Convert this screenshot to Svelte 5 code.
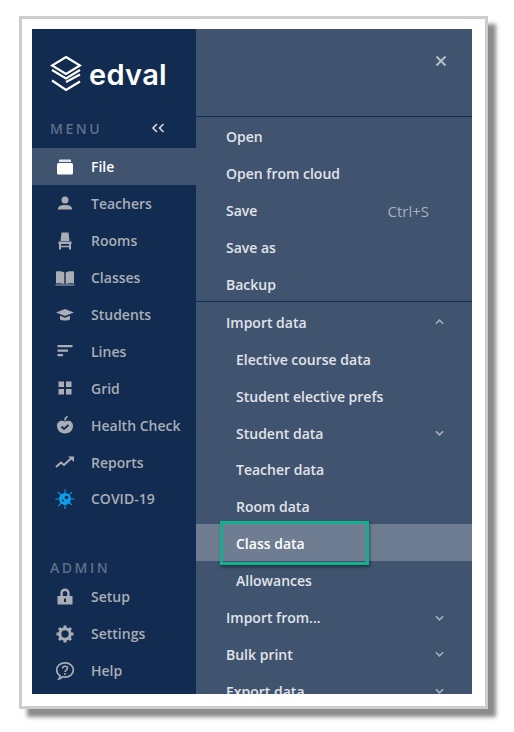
<script>
  const mainMenu = [
    { label: "File", icon: "file", active: true },
    { label: "Teachers", icon: "user" },
    { label: "Rooms", icon: "chair" },
    { label: "Classes", icon: "book" },
    { label: "Students", icon: "cap" },
    { label: "Lines", icon: "lines" },
    { label: "Grid", icon: "grid" },
    { label: "Health Check", icon: "apple" },
    { label: "Reports", icon: "trend" },
    { label: "COVID-19", icon: "virus" },
  ];
  const adminMenu = [
    { label: "Setup", icon: "lock" },
    { label: "Settings", icon: "gear" },
    { label: "Help", icon: "help" },
  ];
  const topItems = [
    { label: "Open" },
    { label: "Open from cloud" },
    { label: "Save", shortcut: "Ctrl+S" },
    { label: "Save as" },
    { label: "Backup" },
  ];
  const subItems = [
    { label: "Elective course data" },
    { label: "Student elective prefs" },
    { label: "Student data", chevron: "down" },
    { label: "Teacher data" },
    { label: "Room data" },
    { label: "Class data", selected: true },
    { label: "Allowances" },
  ];
  const bottomItems = ["Import from...", "Bulk print", "Export data"];
</script>

{#snippet icon(name)}
  <svg class="icon" viewBox="0 0 20 20" width="20" height="20" aria-hidden="true">
    {#if name === "file"}
      <path d="M4 3.500c0-.6.400-1 1-1h10c.6 0 1 .4 1 1V5H4z" fill="currentColor" opacity="0.85" />
      <rect x="2" y="6" width="16" height="11.500" rx="1.500" fill="currentColor" />
    {:else if name === "user"}
      <circle cx="10" cy="6" r="3.500" fill="currentColor" />
      <path d="M2.800 15.500c0-3.200 2.800-4.500 7.200-4.500s7.200 1.300 7.200 4.500z" fill="currentColor" />
    {:else if name === "chair"}
      <path d="M6.500 1.500h7l1 8.500h-9zM3.500 10.500h13v2.500h-13zM4 13h2v5.500H4zM14 13h2v5.500h-2zM6 14.800h8v1.500H6z" fill="currentColor" />
    {:else if name === "book"}
      <path d="M1 3.500c3-.4 6-.4 8.300 1V16c-2.300-1-5.300-1-8.300-.6zM19 3.500c-3-.4-6-.4-8.300 1V16c2.300-1 5.300-1 8.300-.6z" fill="currentColor" />
      <path d="M0.500 17h19" stroke="currentColor" stroke-width="1" />
    {:else if name === "cap"}
      <path d="M1 7.500 10 4l9 3.500-9 3.500z" fill="currentColor" />
      <path d="M5 10.800 10 12.700l5-1.900v3.400c-1.300 1-3 1.300-5 1.300s-3.700-.3-5-1.300z" fill="currentColor" />
    {:else if name === "lines"}
      <path d="M2.500 4h15v2.300h-15zM2.500 8.500h10.500v2.300H2.500zM2.500 13h5.500v2.300H2.500z" fill="currentColor" />
    {:else if name === "grid"}
      <path d="M3.500 3.500h5.500v5.500H3.500zM11 3.500h5.500v5.500H11zM3.500 11h5.500v5.500H3.500zM11 11h5.500v5.500H11z" fill="currentColor" />
    {:else if name === "apple"}
      <path d="M10 6.500c4-2 8 0 8 4.500 0 4.500-3.500 7.500-8 7.500s-8-3-8-7.500c0-4.500 4-6.500 8-4.500z" fill="currentColor" />
      <path d="M10 5.500c0-2 1-3.300 2.500-4.200" fill="none" stroke="currentColor" stroke-width="1.600" />
      <path d="M6.500 11.500l2.500 2.500 4.500-4" fill="none" stroke="#122b50" stroke-width="1.800" />
    {:else if name === "trend"}
      <path d="M1 15l5-4.500 3 2.500 7-6.500" fill="none" stroke="currentColor" stroke-width="2" />
      <path d="M13 4.500h6v5.500z" fill="currentColor" />
    {:else if name === "virus"}
      <g stroke="#0c9fe8" stroke-width="1.100" stroke-linecap="round">
        <path d="M10 10 10 0.800M10 10 10 19.500M10 10 0.800 10M10 10 19.200 10M10 10 3.200 3.200M10 10 16.800 3.400M10 10 3.500 16.800M10 10 16.500 15.500" />
      </g>
      <circle cx="10" cy="10" r="6" fill="#0c9fe8" />
      <circle cx="11.500" cy="8.500" r="1.800" fill="#122b50" />
      <circle cx="7.800" cy="11.500" r="1" fill="#122b50" />
    {:else if name === "lock"}
      <path fill-rule="evenodd" d="M10 1.500c2.800 0 4.600 1.900 4.600 4.600V9H17.500v8.500h-15V9h2.900V6.100c0-2.700 1.800-4.600 4.600-4.600zM7.800 9h4.400V6.100c0-1.300-.9-2.200-2.200-2.200s-2.200.9-2.200 2.200z" fill="currentColor" />
      <rect x="9" y="11.500" width="2" height="3.500" fill="#122b50" />
    {:else if name === "gear"}
      <circle cx="10" cy="10" r="5.200" fill="none" stroke="currentColor" stroke-width="3" />
      <path d="M10 1.500v3M10 15.500v3M1.500 10h3M15.500 10h3M4 4l2.200 2.200M13.800 13.800 16 16M4 16l2.200-2.200M13.800 6.200 16 4" stroke="currentColor" stroke-width="3" />
    {:else if name === "help"}
      <path d="M10 1.800c4.700 0 8.300 3 8.300 7.200s-3.600 7.200-8.300 7.200c-.9 0-1.800-.1-2.600-.4-1 1.200-2 1.900-3.400 2.200.7-1 1-2 1-3.300-2-1.300-3.300-3.400-3.300-5.700 0-4.200 3.600-7.200 8.300-7.200z" fill="none" stroke="currentColor" stroke-width="1.700" />
      <path d="M7.500 7.300c.2-1.400 1.200-2.100 2.500-2.100 1.500 0 2.500.9 2.500 2.100 0 1.800-2.500 1.800-2.500 3.700" fill="none" stroke="currentColor" stroke-width="1.600" />
      <circle cx="10" cy="13" r="1" fill="currentColor" />
    {/if}
  </svg>
{/snippet}

{#snippet chevron(dir)}
  <svg class="chevron" class:up={dir === "up"} viewBox="0 0 10 6" width="9" height="6" aria-hidden="true">
    <path d="M1 1l4 4 4-4" fill="none" stroke="currentColor" stroke-width="1.800" />
  </svg>
{/snippet}

<div class="page">
  <div class="frame">
    <div class="app">
      <aside class="sidebar">
        <div class="logo">
          <svg viewBox="0 0 32 38" width="32" height="38" aria-hidden="true">
            <g fill="none" stroke="#fff" stroke-width="2.200">
              <path d="M16 2 30 10.500 16 19 2 10.500z" />
              <path d="M2 15 16 23.500 30 15" />
              <path d="M2 25.500 16 35 30 26.500M16 27 30 19.500" />
            </g>
          </svg>
          <span class="wordmark">edval</span>
        </div>
        <div class="section-head">
          <span class="section-label">MENU</span>
          <svg class="collapse" viewBox="0 0 14 10" width="14" height="10" aria-hidden="true">
            <path d="M6 1 2 5l4 4M12.500 1l-4 4 4 4" fill="none" stroke="currentColor" stroke-width="1.600" />
          </svg>
        </div>
        <nav>
          {#each mainMenu as item}
            <div class="nav-item" class:active={item.active}>
              {@render icon(item.icon)}
              <span>{item.label}</span>
            </div>
          {/each}
        </nav>
        <div class="admin-label section-label">ADMIN</div>
        <nav>
          {#each adminMenu as item}
            <div class="nav-item">
              {@render icon(item.icon)}
              <span>{item.label}</span>
            </div>
          {/each}
        </nav>
      </aside>

      <section class="panel">
        <div class="panel-head">
          <svg viewBox="0 0 12 12" width="12" height="12" aria-hidden="true">
            <path d="M1.500 1.500l9 9M10.500 1.500l-9 9" stroke="#b4bcc8" stroke-width="2" />
          </svg>
        </div>
        <div class="group">
          {#each topItems as item}
            <div class="row">
              <span>{item.label}</span>
              {#if item.shortcut}<span class="shortcut">{item.shortcut}</span>{/if}
            </div>
          {/each}
        </div>
        <div class="group">
          <div class="row">
            <span>Import data</span>
            {@render chevron("up")}
          </div>
          {#each subItems as item}
            <div class="row sub" class:selected={item.selected}>
              <span>{item.label}</span>
              {#if item.chevron}{@render chevron(item.chevron)}{/if}
              {#if item.selected}<div class="callout"></div>{/if}
            </div>
          {/each}
          {#each bottomItems as label}
            <div class="row">
              <span>{label}</span>
              {@render chevron("down")}
            </div>
          {/each}
        </div>
      </section>
    </div>
  </div>
</div>

<style>
  :global(body) {
    margin: 0;
    background: #fff;
  }

  .page {
    height: 732px;
    padding: 16px 0 0 19px;
    box-sizing: border-box;
    overflow: hidden;
  }

  .frame {
    width: 440px;
    padding: 10px 13px 12px 10px;
    background: #fff;
    border: 3px solid #cdcdcd;
    box-shadow: 8px 8px 4px #8c8c8c;
    font-family: "Open Sans", "Noto Sans", sans-serif;
    font-size: 14px;
    font-weight: 600;
  }

  .app {
    display: flex;
    height: 665px;
    overflow: hidden;
  }

  .sidebar {
    width: 164px;
    flex: none;
    background: #122b50;
    color: #a9aeb6;
  }

  .logo {
    display: flex;
    align-items: center;
    gap: 7px;
    height: 84px;
    padding: 6px 0 0 18px;
    box-sizing: border-box;
  }

  .wordmark {
    color: #fff;
    font-family: Inter, sans-serif;
    font-size: 29px;
    font-weight: 600;
    letter-spacing: 0.3px;
  }

  .section-head {
    display: flex;
    align-items: center;
    justify-content: space-between;
    height: 35px;
    padding: 0 31px 5px 18px;
    box-sizing: border-box;
  }

  .section-label {
    color: #5f6f88;
    font-size: 14px;
    font-weight: 600;
    letter-spacing: 2.500px;
  }

  .collapse {
    color: #d8dce2;
  }

  .admin-label {
    margin-top: 41px;
    padding-left: 18px;
    height: 20px;
    line-height: 20px;
  }

  .nav-item {
    display: flex;
    align-items: center;
    gap: 16px;
    height: 36.900px;
    padding: 1px 0 0 23px;
    box-sizing: border-box;
  }

  .nav-item.active {
    background: #40536f;
    color: #fff;
  }

  .icon {
    flex: none;
  }

  .panel {
    flex: 1;
    background: #40536f;
    color: #e1e4e9;
  }

  .panel-head {
    display: flex;
    justify-content: flex-end;
    height: 88px;
    padding: 26px 25px 0 0;
    box-sizing: border-box;
    border-bottom: 1px solid #122b50;
  }

  .group + .group {
    border-top: 1px solid #122b50;
  }

  .row {
    position: relative;
    display: flex;
    align-items: center;
    justify-content: space-between;
    height: 36.900px;
    padding: 3px 28px 0 30px;
    box-sizing: border-box;
  }

  .row.sub {
    padding-left: 40px;
  }

  .row.selected {
    background: #6f7d93;
    color: #fff;
  }

  .shortcut {
    margin-right: 15px;
    color: #a9b1bd;
    font-size: 15px;
    font-weight: 400;
  }

  .chevron {
    color: #a9b1bd;
  }

  .chevron.up {
    transform: rotate(180deg);
  }

  /* annotation drawn over the selected row */
  .callout {
    position: absolute;
    left: 24px;
    top: -3px;
    width: 143px;
    height: 38px;
    border: 3px solid #12b08c;
    box-shadow: 1px 2px 3px rgba(0, 0, 0, 0.45);
  }
</style>
